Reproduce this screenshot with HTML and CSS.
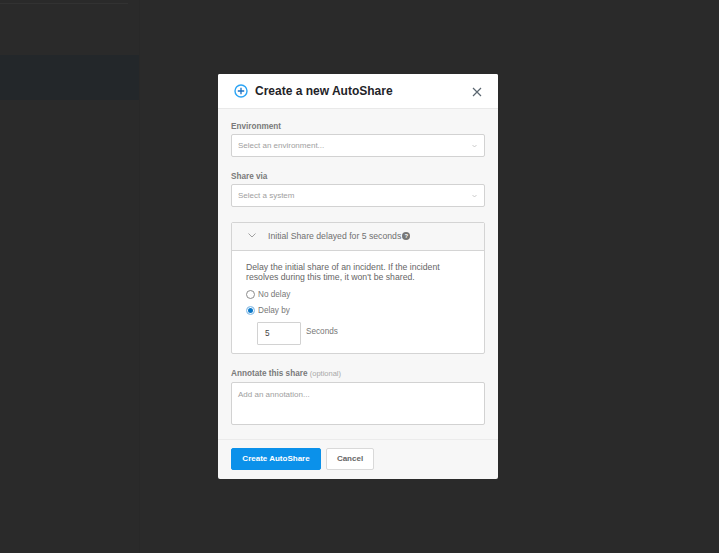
FILE: index.html
```html
<!DOCTYPE html>
<html lang="en">
<head>
<meta charset="utf-8">
<title>Create a new AutoShare</title>
<link rel="stylesheet" href="styles.css">
</head>
<body>
<div class="page">
  <aside class="sidebar">
    <div class="top-rule"></div>
    <div class="active-row"></div>
  </aside>
</div>
<div class="modal">
  <header class="modal-head">
    <svg class="plus-icon" width="14" height="14" viewBox="0 0 14 14"><circle cx="7" cy="7" r="6" fill="none" stroke="#2ba4f5" stroke-width="1.4"/><path d="M7 3.8v6.4M3.8 7h6.4" stroke="#1c6fc0" stroke-width="1.3"/></svg>
    <h1 class="modal-title">Create a new AutoShare</h1>
    <svg class="close-icon" width="10" height="10" viewBox="0 0 10 10"><path d="M1 1l8 8M9 1L1 9" stroke="#5b6670" stroke-width="1.2"/></svg>
  </header>
  <div class="modal-body">
    <label class="field-label">Environment</label>
    <div class="select"><span>Select an environment...</span><svg class="caret" width="5" height="4" viewBox="0 0 5 4"><path d="M.5 1L2.5 3 4.5 1" fill="none" stroke="#b5b5b5" stroke-width=".7"/></svg></div>
    <label class="field-label second">Share via</label>
    <div class="select"><span>Select a system</span><svg class="caret" width="5" height="4" viewBox="0 0 5 4"><path d="M.5 1L2.5 3 4.5 1" fill="none" stroke="#b5b5b5" stroke-width=".7"/></svg></div>
    <section class="panel">
      <div class="panel-head">
        <svg class="panel-caret" width="8" height="5" viewBox="0 0 8 5"><path d="M.5.5L4 4 7.5.5" fill="none" stroke="#8a8a8a" stroke-width=".8"/></svg>
        <span>Initial Share delayed for 5 seconds</span>
        <span class="help">?</span>
      </div>
      <div class="panel-body">
        <p class="desc">Delay the initial share of an incident. If the incident resolves during this time, it won't be shared.</p>
        <div class="radio-row"><span class="radio"></span><span>No delay</span></div>
        <div class="radio-row selected"><span class="radio on"></span><span>Delay by</span></div>
        <div class="delay-row"><div class="num">5</div><span class="unit">Seconds</span></div>
      </div>
    </section>
    <label class="field-label third">Annotate this share <span class="optional">(optional)</span></label>
    <div class="textarea">Add an annotation...</div>
  </div>
  <footer class="modal-foot">
    <button class="btn primary">Create AutoShare</button>
    <button class="btn">Cancel</button>
  </footer>
</div>
</body>
</html>
```
FILE: styles.css
```css
* { box-sizing: border-box; }
html, body { margin: 0; height: 100%; }
body { background: #2a2a2a; font-family: "Liberation Sans", Arial, sans-serif; overflow: hidden; }
.page { height: 553px; display: flex; }
.sidebar { width: 140px; border-right: 1px solid #282828; padding-top: 3px; }
.top-rule { width: 128px; height: 1px; background: #323232; }
.active-row { height: 45px; margin-top: 51px; background: #23272a; }
.modal { position: absolute; left: 218px; top: 74px; width: 280px; height: 405px; background: #f7f7f7; border-radius: 2px; display: flex; flex-direction: column; }
.modal-head { height: 35px; flex: none; background: #fff; border-bottom: 1px solid #e9e9e9; display: flex; align-items: center; padding: 0 16px; border-radius: 2px 2px 0 0; }
.plus-icon { flex: none; }
.modal-title { margin: 0 0 0 7px; font-size: 12px; line-height: 16px; font-weight: 700; color: #1f2328; flex: 1; }
.close-icon { flex: none; margin-top: 2px; }
.modal-body { flex: 1; padding: 12px 13px 0; }
.field-label { display: block; font-size: 8.2px; line-height: 11px; font-weight: 700; color: #7a7a7a; margin-bottom: 2px; }
.field-label.second { margin-top: 14px; }
.field-label.third { margin-bottom: 3px; }
.select { height: 23px; background: #fff; border: 1px solid #d2d2d2; border-radius: 2px; display: flex; align-items: center; justify-content: space-between; padding: 0 7px 0 6px; font-size: 8px; color: #a0a0a0; }
.select span { position: relative; top: -0.5px; }
.panel { margin-top: 15px; height: 132px; background: #fff; border: 1px solid #d4d4d4; border-radius: 2px; margin-bottom: 14px; }
.panel-head { height: 28px; padding-bottom: 2px; background: #f7f7f7; border-bottom: 1px solid #d4d4d4; display: flex; align-items: center; padding-left: 16px; font-size: 8.7px; color: #707070; }
.panel-caret { margin-right: 12px; }
.help { width: 8px; height: 8px; margin-left: 1px; border-radius: 50%; background: #777; color: #fff; font-size: 6px; line-height: 8px; font-weight: 700; text-align: center; }
.panel-body { padding: 11px 30px 0 14px; font-size: 8.7px; color: #6a6a6a; }
.desc { margin: 0 0 4px; line-height: 10px; color: #666; }
.radio-row { display: flex; align-items: center; height: 16px; color: #777; font-size: 8.2px; }
.radio { width: 9px; height: 9px; border: 1px solid #8c8c8c; border-radius: 50%; background: #fff; margin-right: 3px; }
.radio.on { border-color: #a9cfee; background: #0b78c9; box-shadow: inset 0 0 0 1px #fff; }
.delay-row { display: flex; align-items: flex-start; margin: 4px 0 0 11px; }
.num { width: 44px; height: 23px; background: #fff; border: 1px solid #d2d2d2; border-radius: 1px; padding-left: 7px; line-height: 21px; color: #444; font-size: 8.2px; }
.unit { margin: 4px 0 0 5px; line-height: 11px; color: #777; font-size: 8.2px; }
.optional { font-weight: 400; color: #a8a8a8; font-size: 7.5px; }
.textarea { height: 43px; background: #fff; border: 1px solid #d2d2d2; border-radius: 2px; padding: 6px; font-size: 8px; line-height: 11px; color: #a0a0a0; }
.modal-foot { height: 40px; flex: none; border-top: 1px solid #ebebeb; padding: 8px 13px 0; display: flex; gap: 5px; align-items: flex-start; }
.btn { height: 22px; width: 48px; padding: 0 0 2px; border: 1px solid #d9d9d9; border-radius: 2px; background: #fff; color: #666; font: 700 8px "Liberation Sans", Arial, sans-serif; }
.btn.primary { width: 90px; background: #0b91ea; border-color: #0b91ea; color: #fff; }
```
